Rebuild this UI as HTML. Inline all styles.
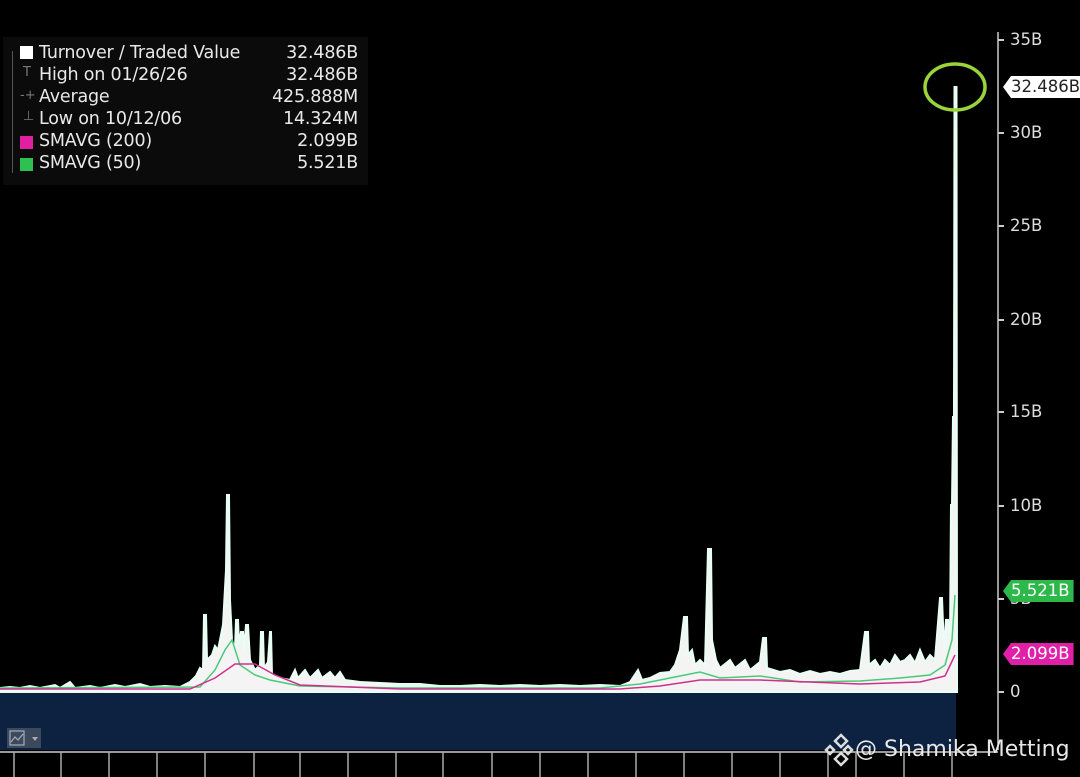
<!DOCTYPE html>
<html><head><meta charset="utf-8"><style>
html,body{margin:0;padding:0;background:#000;width:1080px;height:777px;overflow:hidden;font-family:"DejaVu Sans","Liberation Sans",sans-serif}
.leg{position:absolute;left:3px;top:37px;width:365px;height:148px;background:#0b0b0b}
.r{position:absolute;left:36px;color:#e8e8e8;font-size:17.5px;line-height:22px;white-space:nowrap;letter-spacing:-0.2px}
.v{position:absolute;right:10px;color:#e8e8e8;font-size:17.5px;line-height:22px;text-align:right;letter-spacing:-0.2px}
.yl{position:absolute;left:1010px;color:#ddd;font-size:16.5px}
.tag{position:absolute;left:1003px;height:22px;line-height:22px;font-size:16.5px;padding:0 4px 0 8px;clip-path:polygon(0 50%,8px 0,100% 0,100% 100%,8px 100%)}
</style></head><body>
<svg width="1080" height="777" style="position:absolute;left:0;top:0">
<rect x="0" y="690" width="956" height="60" fill="#0c2240"/>
<path d="M205,690 L215,686 L225,676 L235,672 L245,680 L255,686 L270,690Z" fill="#0c2240"/>
<path fill="#f4f4f4" stroke="#e8fff4" stroke-width="2" d="M0,692 L0,688 L10,687 L20,688 L30,686 L40,688 L55,685 L60,688 L70,682 L75,688 L90,686 L100,688 L115,685 L125,687 L140,684 L150,687 L165,686 L180,687 L190,682 L196,676 L200,668 L203,670 L204,615 L206,615 L207,660 L212,655 L215,646 L218,650 L220,640 L223,625 L226,570 L227,495 L229,495 L230,600 L232,640 L235,650 L236,620 L238,620 L239,645 L241,632 L243,632 L244,650 L246,625 L248,625 L250,660 L255,670 L260,665 L261,632 L263,632 L264,668 L268,662 L270,632 L271,632 L272,675 L280,678 L290,680 L295,670 L298,678 L305,670 L310,678 L318,670 L322,678 L330,672 L335,678 L340,672 L345,680 L360,682 L380,683 L400,684 L420,684 L440,686 L460,686 L480,685 L500,686 L520,685 L540,686 L560,685 L580,686 L600,685 L620,686 L630,682 L638,670 L642,680 L650,678 L660,673 L670,672 L675,665 L680,650 L684,617 L687,617 L688,655 L692,650 L695,665 L700,660 L705,665 L708,549 L711,549 L712,640 L716,660 L720,668 L730,660 L735,668 L745,660 L750,670 L760,662 L763,638 L766,638 L767,668 L780,672 L790,670 L800,674 L810,671 L820,674 L830,672 L840,674 L850,671 L860,670 L865,632 L868,632 L869,665 L875,660 L880,668 L885,660 L890,665 L895,655 L900,662 L905,660 L910,655 L915,663 L920,650 L925,662 L930,655 L935,660 L940,598 L942,598 L944,650 L946,620 L948,620 L950,640 L951,505 L952,505 L953,417 L954,417 L954.5,87 L956.5,87 L957,692Z"/>
<polyline fill="none" stroke="#4ac97a" stroke-width="1.5" points="0,688 200,687 215,670 225,650 232,640 240,665 255,675 270,680 300,686 400,688 600,688 640,684 680,676 700,672 720,678 760,676 800,682 860,681 900,678 930,675 945,665 952,640 955,595"/>
<polyline fill="none" stroke="#d0308c" stroke-width="1.5" points="0,689 190,689 215,678 235,664 255,664 275,675 300,685 400,689 620,689 660,686 700,680 760,680 860,684 920,682 945,676 955,655"/>
<ellipse cx="955" cy="87" rx="30" ry="23" fill="none" stroke="#9ad43a" stroke-width="3.5"/>
<line x1="998" y1="32" x2="998" y2="750" stroke="#ccc" stroke-width="1.5"/>
<g stroke="#ccc" stroke-width="2">
<line x1="998" y1="40" x2="1004" y2="40"/><line x1="998" y1="133" x2="1004" y2="133"/><line x1="998" y1="226" x2="1004" y2="226"/><line x1="998" y1="320" x2="1004" y2="320"/><line x1="998" y1="412" x2="1004" y2="412"/><line x1="998" y1="506" x2="1004" y2="506"/><line x1="998" y1="599" x2="1004" y2="599"/><line x1="998" y1="692" x2="1004" y2="692"/>
</g>
<line x1="0" y1="752" x2="998" y2="752" stroke="#999" stroke-width="2"/>
<g stroke="#aaa" stroke-width="1.5">
<line x1="14" y1="752" x2="14" y2="777"/><line x1="61" y1="752" x2="61" y2="777"/><line x1="109" y1="752" x2="109" y2="777"/><line x1="157" y1="752" x2="157" y2="777"/><line x1="205" y1="752" x2="205" y2="777"/><line x1="254" y1="752" x2="254" y2="777"/><line x1="300" y1="752" x2="300" y2="777"/><line x1="348" y1="752" x2="348" y2="777"/><line x1="396" y1="752" x2="396" y2="777"/><line x1="443" y1="752" x2="443" y2="777"/><line x1="492" y1="752" x2="492" y2="777"/><line x1="540" y1="752" x2="540" y2="777"/><line x1="588" y1="752" x2="588" y2="777"/><line x1="636" y1="752" x2="636" y2="777"/><line x1="684" y1="752" x2="684" y2="777"/><line x1="732" y1="752" x2="732" y2="777"/><line x1="780" y1="752" x2="780" y2="777"/><line x1="828" y1="752" x2="828" y2="777"/><line x1="856" y1="752" x2="856" y2="777"/><line x1="904" y1="752" x2="904" y2="777"/><line x1="952" y1="752" x2="952" y2="777"/>
</g>
<rect x="7" y="728" width="34" height="20" fill="#3a4a5c"/>
<rect x="10" y="731" width="14" height="14" fill="none" stroke="#aab" stroke-width="1.2"/>
<polyline points="11,742 15,737 18,740 23,734" fill="none" stroke="#aab" stroke-width="1.2"/>
<path d="M32,737 L38,737 L35,741Z" fill="#aab"/>
<g fill="none" stroke="#ddd" stroke-width="2.5"><path d="M835,741 l6,-6 6,6 -6,6z"/><path d="M826,750 l4,-4 4,4 -4,4z"/><path d="M844,750 l4,-4 4,4 -4,4z"/><path d="M835,759 l6,-6 6,6 -6,6z"/></g>
</svg>
<div class="leg">
<div style="position:absolute;left:9px;top:14px;width:1px;height:122px;background:#555"></div>
<div style="position:absolute;left:17px;top:9px;width:13px;height:13px;background:#fff"></div>
<div style="position:absolute;left:17px;top:99px;width:13px;height:13px;background:#e020a0"></div>
<div style="position:absolute;left:17px;top:121px;width:13px;height:13px;background:#2ec050"></div>
<div style="position:absolute;left:20px;top:28px;color:#777;font-size:13px">T</div>
<div style="position:absolute;left:17px;top:51px;color:#777;font-size:13px">-+</div>
<div style="position:absolute;left:20px;top:72px;color:#777;font-size:13px">⊥</div>
<div class="r" style="top:5px">Turnover / Traded Value</div><div class="v" style="top:5px">32.486B</div>
<div class="r" style="top:27px">High on 01/26/26</div><div class="v" style="top:27px">32.486B</div>
<div class="r" style="top:49px">Average</div><div class="v" style="top:49px">425.888M</div>
<div class="r" style="top:71px">Low on 10/12/06</div><div class="v" style="top:71px">14.324M</div>
<div class="r" style="top:93px">SMAVG (200)</div><div class="v" style="top:93px">2.099B</div>
<div class="r" style="top:115px">SMAVG (50)</div><div class="v" style="top:115px">5.521B</div>
</div>
<div class="yl" style="top:30px">35B</div>
<div class="yl" style="top:123px">30B</div>
<div class="yl" style="top:216px">25B</div>
<div class="yl" style="top:310px">20B</div>
<div class="yl" style="top:402px">15B</div>
<div class="yl" style="top:496px">10B</div>
<div class="yl" style="top:589px">5B</div>
<div class="yl" style="top:682px">0</div>
<div class="tag" style="top:76px;background:#fff;color:#222">32.486B</div>
<div class="tag" style="top:580px;background:#2db84a;color:#fff">5.521B</div>
<div class="tag" style="top:643px;background:#e020a8;color:#fff">2.099B</div>
<div style="position:absolute;left:855px;top:737px;color:#e8e8e8;font-size:22px;font-family:'DejaVu Sans',sans-serif">@ Shamika Metting</div>
</body></html>
